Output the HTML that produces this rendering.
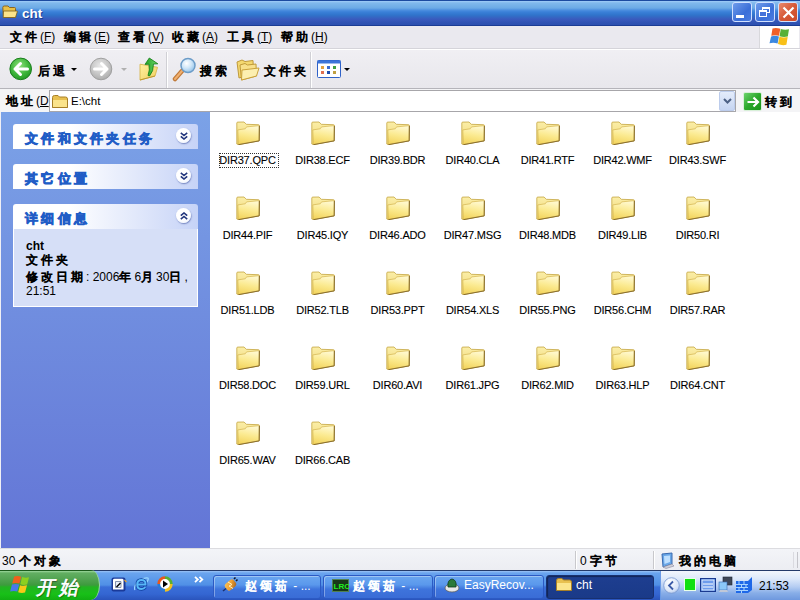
<!DOCTYPE html>
<html><head><meta charset="utf-8">
<style>
*{box-sizing:border-box;margin:0;padding:0}
html,body{width:800px;height:600px;overflow:hidden;background:#fff;font-family:"Liberation Sans",sans-serif;font-size:12px;color:#000}
.a{position:absolute}
#title{left:0;top:0;width:800px;height:26px;background:linear-gradient(to bottom,#1C4AA0 0px,#1C4AA0 1px,#A0CCF8 1px,#80B8EC 3px,#6CAAE6 8px,#4E90E0 10px,#3A80D8 12px,#3074CB 15px,#3468C4 17px,#3A5BBE 19px,#2E52B2 23px,#2C50B0 25px,#1A3C94 25px,#1A3C94 26px)}
#title .t{left:22px;top:6px;color:#fff;font-weight:bold;font-size:13.5px;text-shadow:1px 1px 0 #1A3C94}
.tb{top:2px;width:20px;height:20px;border:1px solid #D0E0FF;border-radius:3px;background:linear-gradient(135deg,#6E9CEB,#3B6FD8 60%,#4A7CE0)}
#menu{left:0;top:26px;width:800px;height:23px;background:#EAE9EF;border-bottom:1px solid #D5D4DA}
.m{top:3px}
#tool{left:0;top:49px;width:800px;height:40px;background:linear-gradient(#F0EFF3,#E8E7EC);border-top:1px solid #fff;border-bottom:1px solid #B5B4BA}
#addr{left:0;top:89px;width:800px;height:23px;background:#F4F4F6}
#left{left:0;top:112px;width:210px;height:436px;background:linear-gradient(#7BA2E7,#6375D6);border-left:1px solid #F0F0F5}
.ph{left:12px;width:185px;height:25px;border-radius:3px 3px 0 0;background:linear-gradient(to right,#fff 0%,#fff 30%,#C6D3F7 100%)}
.ph .ht{position:absolute;left:12px;top:6px;color:#215DC6;font-weight:bold;font-size:13px}
.chev{position:absolute;left:163px;top:4px;width:15px;height:15px;border-radius:50%;background:radial-gradient(circle at 40% 35%,#fff 50%,#E8EEFA 100%);box-shadow:0.5px 1px 1.5px rgba(40,60,140,.55)}
#content{left:210px;top:112px;width:590px;height:436px;background:#fff}
.it{width:75px;height:75px}
.it svg{position:absolute;left:26px;top:9px}
.it .l{position:absolute;left:0;top:41.5px;width:75px;text-align:center;font-size:11px;letter-spacing:-0.2px;-webkit-text-stroke:0.1px #000}
#status{left:0;top:548px;width:800px;height:22px;background:linear-gradient(#F3F4F8,#ECEDF2);border-top:1px solid #DCDCE0}
#task{left:0;top:570px;width:800px;height:30px;background:linear-gradient(#243A6A 0px,#243A6A 1px,#9CC4F6 1px,#6AA4EE 3px,#5A98EA 10px,#5090E6 15px,#3A6ED8 17px,#3466D2 24px,#2A54BC 30px)}
.btn{height:24px;border-radius:3px;background:linear-gradient(#6AA6F0,#5A98EC 40%,#3E74DC 60%,#3A6CD6);border:1px solid #2C5AC4;box-shadow:inset 1px 1px 0 rgba(255,255,255,.35)}
.btn .bt{position:absolute;top:1.5px;color:#fff;font-size:12px}
.cj{letter-spacing:0.25em;-webkit-text-stroke:0.75px currentColor}</style></head><body>
<svg width="0" height="0" style="position:absolute"><defs>
<linearGradient id="fg" x1="0.3" y1="0" x2="0.1" y2="1"><stop offset="0" stop-color="#FFF8CC"/><stop offset="0.45" stop-color="#FBEA90"/><stop offset="1" stop-color="#F2D258"/></linearGradient>
<linearGradient id="ft" x1="0" y1="0" x2="0" y2="1"><stop offset="0" stop-color="#FBEEA8"/><stop offset="1" stop-color="#EED470"/></linearGradient>
<symbol id="fold" viewBox="0 0 24 24">
<path d="M0.8,2 Q0.8,1.1 1.8,1.1 L8,1 L10.4,3.3 L22.6,3.7 Q23.5,3.8 23.5,4.8 L23.2,19.8 L2.4,23.6 L0.8,23 Z" fill="url(#ft)" stroke="#C4A440" stroke-width="0.8"/>
<path d="M1.8,8.9 L9.2,7.8 L10.6,5.9 L23.2,4.6 L23,19.7 L2.3,23.5 Z" fill="url(#fg)" stroke="#D4B450" stroke-width="0.7"/>
<path d="M23.4,5 L23.2,19.9 L2.4,23.7" fill="none" stroke="#7A6028" stroke-width="1" opacity="0.85"/>
</symbol></defs></svg>
<div id="title" class="a">
  <svg class="a" style="left:2px;top:5px" width="16" height="14" viewBox="0 0 16 14"><path d="M0.8,2.5 Q0.8,1 2.3,1 L6,1 L7.5,2.5 L12.5,2.5 Q13.5,2.5 13.5,3.5 L13.5,12.3 L1.5,12.3 Z" fill="#E8C048" stroke="#8A6420" stroke-width="1"/><path d="M1.5,6 L15,6 Q15.6,6 15.3,6.8 L13.5,12.5 L1.2,12.5 Z" fill="#FBE38A" stroke="#7A5A1A" stroke-width="0.8"/></svg>
  <div class="a t">cht</div>
  <div class="a tb" style="left:732px"><div class="a" style="left:3px;top:12px;width:8px;height:3px;background:#fff"></div></div>
  <div class="a tb" style="left:755px"><div class="a" style="left:6px;top:4px;width:8px;height:6px;border:1px solid #fff;border-top-width:2px"></div><div class="a" style="left:3px;top:7px;width:8px;height:7px;border:1px solid #fff;border-top-width:2px;background:#4573DA"></div></div>
  <div class="a tb" style="left:778px;background:linear-gradient(135deg,#E98A6E,#D65A38 50%,#CC4A28)"><svg class="a" style="left:3px;top:3px" width="13" height="13" viewBox="0 0 13 13"><path d="M1.5,1.5 L11.5,11.5 M11.5,1.5 L1.5,11.5" stroke="#fff" stroke-width="2.2"/></svg></div>
</div>
<div id="menu" class="a">
  <div class="a m" style="left:10px"><span class="cj">文件</span>(<u>F</u>)</div>
  <div class="a m" style="left:64px"><span class="cj">编辑</span>(<u>E</u>)</div>
  <div class="a m" style="left:118px"><span class="cj">查看</span>(<u>V</u>)</div>
  <div class="a m" style="left:172px"><span class="cj">收藏</span>(<u>A</u>)</div>
  <div class="a m" style="left:227px"><span class="cj">工具</span>(<u>T</u>)</div>
  <div class="a m" style="left:281px"><span class="cj">帮助</span>(<u>H</u>)</div>
  <div class="a" style="left:759px;top:0;width:40px;height:22px;background:#fff;border-left:1px solid #D8D8DC"></div>
  <svg class="a" style="left:768px;top:1px" width="22" height="20" viewBox="0 0 22 20"><path d="M4.5,1.5 Q8,0.5 12.3,1.8 L11,8.8 Q7,7.6 3.3,8.8 Z" fill="#F06028"/><path d="M12.8,2 Q17,3.2 21,2.2 L19.8,9.5 Q15.5,10.5 11.5,9.2 Z" fill="#58B038"/><path d="M3.1,9.4 Q7,8.2 10.9,9.4 L9.6,16.5 Q5.5,15.3 1.5,16.3 Z" fill="#3C88E0"/><path d="M11.4,9.8 Q15.5,11 19.7,10 L18.4,17.8 Q14,18.8 10,17 Z" fill="#F8C018"/></svg>
</div>
<div id="tool" class="a">
  <svg class="a" style="left:9px;top:7px" width="24" height="24" viewBox="0 0 24 24"><defs><radialGradient id="gb" cx="0.45" cy="0.35" r="0.7"><stop offset="0" stop-color="#8EE07A"/><stop offset="0.6" stop-color="#3DB53A"/><stop offset="1" stop-color="#1F9620"/></radialGradient></defs><circle cx="11.7" cy="11.9" r="10.8" fill="url(#gb)" stroke="#1B7E1E" stroke-width="1"/><path d="M18.5,12 L6,12 M11.5,6.5 L6,12 L11.5,17.5" fill="none" stroke="#fff" stroke-width="3" stroke-linecap="round" stroke-linejoin="round"/></svg>
  <div class="a" style="left:38px;top:13px"><span class="cj">后退</span></div>
  <div class="a" style="left:71px;top:18px;width:0;height:0;border-left:3px solid transparent;border-right:3px solid transparent;border-top:3px solid #000"></div>
  <svg class="a" style="left:89px;top:7px" width="24" height="24" viewBox="0 0 24 24"><defs><radialGradient id="gg" cx="0.45" cy="0.35" r="0.7"><stop offset="0" stop-color="#E8E8E8"/><stop offset="0.6" stop-color="#C4C4C4"/><stop offset="1" stop-color="#A8A8A8"/></radialGradient></defs><circle cx="12" cy="12" r="10.8" fill="url(#gg)" stroke="#A0A0A0" stroke-width="1"/><path d="M5.5,12 L18,12 M12.5,6.5 L18,12 L12.5,17.5" fill="none" stroke="#fff" stroke-width="3" stroke-linecap="round" stroke-linejoin="round"/></svg>
  <div class="a" style="left:121px;top:18px;width:0;height:0;border-left:3px solid transparent;border-right:3px solid transparent;border-top:3px solid #B0B0B0"></div>
  <svg class="a" style="left:138px;top:2px" width="22" height="30" viewBox="0 0 22 30"><defs><linearGradient id="upf" x1="0" y1="0" x2="1" y2="1"><stop offset="0" stop-color="#FFF0A0"/><stop offset="1" stop-color="#F0D060"/></linearGradient><linearGradient id="upa" x1="0" y1="0" x2="1" y2="0"><stop offset="0" stop-color="#20A020"/><stop offset="1" stop-color="#70D870"/></linearGradient></defs><path d="M2,12.2 L19.5,15.3 L17,24 L2,28 Z" fill="url(#upf)" stroke="#D8B850" stroke-width="0.9"/><path d="M2,28 L17,24" stroke="#C09830" stroke-width="1"/><path d="M11.3,6 L19.8,11.8 L15.4,12 Q15.8,19 11.5,24 L10,23.5 Q12.2,18 10.9,12.2 L7,12.4 Z" fill="url(#upa)" stroke="#0E7A10" stroke-width="0.8"/></svg>
  <div class="a" style="left:166px;top:2px;width:2px;height:36px;background:#D0D0D5;border-right:1px solid #fff"></div>
  <svg class="a" style="left:172px;top:7px" width="25" height="25" viewBox="0 0 25 25"><defs><radialGradient id="lens" cx="0.4" cy="0.35" r="0.7"><stop offset="0" stop-color="#FFFFFF"/><stop offset="0.5" stop-color="#CFE6F8"/><stop offset="1" stop-color="#8FC0E8"/></radialGradient></defs><path d="M3,22 L10,14" stroke="#C07A3A" stroke-width="4.5" stroke-linecap="round"/><path d="M3,22 L10,14" stroke="#F0B070" stroke-width="2" stroke-linecap="round"/><circle cx="16" cy="8.5" r="7" fill="url(#lens)" stroke="#6C9CC8" stroke-width="1.5"/></svg>
  <div class="a" style="left:200px;top:13px"><span class="cj">搜索</span></div>
  <svg class="a" style="left:236px;top:9px" width="24" height="22" viewBox="0 0 24 22"><path d="M1,3 L6,1 L9,2.5 L17,1.5 L17.5,14 L3,19 Z" fill="#F4D870" stroke="#C09A3A" stroke-width="1"/><path d="M4,6 L9,4.5 L11.5,6 L20,5 L20.5,17 L5.5,21 Z" fill="#F8E08A" stroke="#C09A3A" stroke-width="1"/><path d="M6,11 L23,9 L20.5,17 L5.5,21 Z" fill="#FCEFB0" stroke="#C9A13A" stroke-width="1"/></svg>
  <div class="a" style="left:264px;top:13px"><span class="cj">文件夹</span></div>
  <div class="a" style="left:310px;top:2px;width:2px;height:36px;background:#D0D0D5;border-right:1px solid #fff"></div>
  <svg class="a" style="left:317px;top:10px" width="25" height="19" viewBox="0 0 25 19"><rect x="0.5" y="0.5" width="23" height="17" rx="1" fill="#fff" stroke="#2F62C8"/><rect x="0.5" y="0.5" width="23" height="3" fill="#3D74D8"/><rect x="4" y="6" width="3" height="3" fill="#E0A040"/><rect x="10" y="6" width="3" height="3" fill="#3A6AD0"/><rect x="16" y="6" width="3" height="3" fill="#40A040"/><rect x="4" y="11" width="3" height="3" fill="#E07050"/><rect x="10" y="11" width="3" height="3" fill="#2050B0"/><rect x="16" y="11" width="3" height="3" fill="#C0A040"/></svg>
  <div class="a" style="left:344px;top:18px;width:0;height:0;border-left:3px solid transparent;border-right:3px solid transparent;border-top:3px solid #000"></div>
</div>
<div id="addr" class="a">
  <div class="a" style="left:6px;top:4px"><span class="cj">地址</span>(<u>D</u>)</div>
  <div class="a" style="left:49px;top:1px;width:687px;height:22px;background:#fff;border:1px solid #A7A6AA"></div>
  <svg class="a" style="left:52px;top:6px" width="16" height="13" viewBox="0 0 16 13"><path d="M0.5,2.5 Q0.5,0.5 2.5,0.5 L6,0.5 L7.5,2 L13.5,2 Q15.5,2 15.5,4 L15.5,12.5 L0.5,12.5 Z" fill="#E8C050" stroke="#A88028"/><path d="M1,5 L15,5 L15,12 L1,12 Z" fill="#FBE48C"/><path d="M0.5,12.5 L15.5,12.5" stroke="#A88028"/></svg>
  <div class="a" style="left:71px;top:6px;font-size:11.5px">E:\cht</div>
  <div class="a" style="left:719px;top:2px;width:16px;height:20px;border-radius:2px;background:linear-gradient(#E4ECFB,#C6D5F2);border:1px solid #BCCCEC"><svg class="a" style="left:3px;top:6px" width="9" height="6" viewBox="0 0 9 6"><path d="M1,1 L4.5,4.5 L8,1" fill="none" stroke="#4D6185" stroke-width="2"/></svg></div>
  <div class="a" style="left:743px;top:3px;width:19px;height:19px;background:linear-gradient(135deg,#6CD46C,#2DA82D 50%,#1A961A);border-radius:2px;border:1px solid #D8F0D8"><svg class="a" style="left:2px;top:2px" width="14" height="14" viewBox="0 0 14 14"><path d="M1.5,7 L11.5,7 M7.5,2.5 L12,7 L7.5,11.5" fill="none" stroke="#fff" stroke-width="2.2"/></svg></div>
  <div class="a" style="left:765px;top:5px"><span class="cj">转到</span></div>
</div>
<div id="left" class="a">
  <div class="a ph" style="top:12px"><div class="ht"><span class="cj">文件和文件夹任务</span></div><div class="chev"><svg class="a" style="left:4px;top:4px" width="8" height="8" viewBox="0 0 8 8"><path d="M0.8,0.8 L4,3.5 L7.2,0.8 M0.8,4.3 L4,7 L7.2,4.3" fill="none" stroke="#21357C" stroke-width="1.6"/></svg></div></div>
  <div class="a ph" style="top:52px"><div class="ht"><span class="cj">其它位置</span></div><div class="chev"><svg class="a" style="left:4px;top:4px" width="8" height="8" viewBox="0 0 8 8"><path d="M0.8,0.8 L4,3.5 L7.2,0.8 M0.8,4.3 L4,7 L7.2,4.3" fill="none" stroke="#21357C" stroke-width="1.6"/></svg></div></div>
  <div class="a ph" style="top:92px"><div class="ht"><span class="cj">详细信息</span></div><div class="chev"><svg class="a" style="left:4px;top:4px" width="8" height="8" viewBox="0 0 8 8"><path d="M0.8,3.7 L4,1 L7.2,3.7 M0.8,7.2 L4,4.5 L7.2,7.2" fill="none" stroke="#21357C" stroke-width="1.6"/></svg></div></div>
  <div class="a" style="left:12px;top:117px;width:185px;height:78px;background:#D6DFF7;border:1px solid #fff;border-top:0">
    <div class="a" style="left:12px;top:10px;font-weight:bold;font-size:12px">cht</div>
    <div class="a" style="left:12px;top:23px;font-size:12px"><span class="cj">文件夹</span></div>
    <div class="a" style="left:12px;top:41px;font-size:12px;line-height:14px;width:170px"><span class="cj">修改日期</span>: 2006<span class="cj">年</span>6<span class="cj">月</span>30<span class="cj">日</span>,<br>21:51</div>
  </div>
</div>
<div id="content" class="a">
<div class="a it" style="left:0px;top:0px"><svg width="24" height="24"><use href="#fold"/></svg><div class="a" style="left:9px;top:41px;width:60px;height:15px;border:1px dotted #333"></div><div class="l">DIR37.QPC</div></div>
<div class="a it" style="left:75px;top:0px"><svg width="24" height="24"><use href="#fold"/></svg><div class="l">DIR38.ECF</div></div>
<div class="a it" style="left:150px;top:0px"><svg width="24" height="24"><use href="#fold"/></svg><div class="l">DIR39.BDR</div></div>
<div class="a it" style="left:225px;top:0px"><svg width="24" height="24"><use href="#fold"/></svg><div class="l">DIR40.CLA</div></div>
<div class="a it" style="left:300px;top:0px"><svg width="24" height="24"><use href="#fold"/></svg><div class="l">DIR41.RTF</div></div>
<div class="a it" style="left:375px;top:0px"><svg width="24" height="24"><use href="#fold"/></svg><div class="l">DIR42.WMF</div></div>
<div class="a it" style="left:450px;top:0px"><svg width="24" height="24"><use href="#fold"/></svg><div class="l">DIR43.SWF</div></div>
<div class="a it" style="left:0px;top:75px"><svg width="24" height="24"><use href="#fold"/></svg><div class="l">DIR44.PIF</div></div>
<div class="a it" style="left:75px;top:75px"><svg width="24" height="24"><use href="#fold"/></svg><div class="l">DIR45.IQY</div></div>
<div class="a it" style="left:150px;top:75px"><svg width="24" height="24"><use href="#fold"/></svg><div class="l">DIR46.ADO</div></div>
<div class="a it" style="left:225px;top:75px"><svg width="24" height="24"><use href="#fold"/></svg><div class="l">DIR47.MSG</div></div>
<div class="a it" style="left:300px;top:75px"><svg width="24" height="24"><use href="#fold"/></svg><div class="l">DIR48.MDB</div></div>
<div class="a it" style="left:375px;top:75px"><svg width="24" height="24"><use href="#fold"/></svg><div class="l">DIR49.LIB</div></div>
<div class="a it" style="left:450px;top:75px"><svg width="24" height="24"><use href="#fold"/></svg><div class="l">DIR50.RI</div></div>
<div class="a it" style="left:0px;top:150px"><svg width="24" height="24"><use href="#fold"/></svg><div class="l">DIR51.LDB</div></div>
<div class="a it" style="left:75px;top:150px"><svg width="24" height="24"><use href="#fold"/></svg><div class="l">DIR52.TLB</div></div>
<div class="a it" style="left:150px;top:150px"><svg width="24" height="24"><use href="#fold"/></svg><div class="l">DIR53.PPT</div></div>
<div class="a it" style="left:225px;top:150px"><svg width="24" height="24"><use href="#fold"/></svg><div class="l">DIR54.XLS</div></div>
<div class="a it" style="left:300px;top:150px"><svg width="24" height="24"><use href="#fold"/></svg><div class="l">DIR55.PNG</div></div>
<div class="a it" style="left:375px;top:150px"><svg width="24" height="24"><use href="#fold"/></svg><div class="l">DIR56.CHM</div></div>
<div class="a it" style="left:450px;top:150px"><svg width="24" height="24"><use href="#fold"/></svg><div class="l">DIR57.RAR</div></div>
<div class="a it" style="left:0px;top:225px"><svg width="24" height="24"><use href="#fold"/></svg><div class="l">DIR58.DOC</div></div>
<div class="a it" style="left:75px;top:225px"><svg width="24" height="24"><use href="#fold"/></svg><div class="l">DIR59.URL</div></div>
<div class="a it" style="left:150px;top:225px"><svg width="24" height="24"><use href="#fold"/></svg><div class="l">DIR60.AVI</div></div>
<div class="a it" style="left:225px;top:225px"><svg width="24" height="24"><use href="#fold"/></svg><div class="l">DIR61.JPG</div></div>
<div class="a it" style="left:300px;top:225px"><svg width="24" height="24"><use href="#fold"/></svg><div class="l">DIR62.MID</div></div>
<div class="a it" style="left:375px;top:225px"><svg width="24" height="24"><use href="#fold"/></svg><div class="l">DIR63.HLP</div></div>
<div class="a it" style="left:450px;top:225px"><svg width="24" height="24"><use href="#fold"/></svg><div class="l">DIR64.CNT</div></div>
<div class="a it" style="left:0px;top:300px"><svg width="24" height="24"><use href="#fold"/></svg><div class="l">DIR65.WAV</div></div>
<div class="a it" style="left:75px;top:300px"><svg width="24" height="24"><use href="#fold"/></svg><div class="l">DIR66.CAB</div></div>
</div>
<div id="status" class="a">
  <div class="a" style="left:2px;top:4px;font-size:12px">30 <span class="cj">个对象</span></div>
  <div class="a" style="left:575px;top:2px;width:2px;height:18px;background:#C8C8CC;border-right:1px solid #fff"></div>
  <div class="a" style="left:580px;top:4px;font-size:12px">0 <span class="cj">字节</span></div>
  <div class="a" style="left:653px;top:2px;width:2px;height:18px;background:#C8C8CC;border-right:1px solid #fff"></div>
  <svg class="a" style="left:660px;top:3px" width="15" height="17" viewBox="0 0 15 17"><path d="M2,2 L12,1 L12,12 L3,15 Z" fill="#6AA8E8" stroke="#3A6AB0"/><path d="M4,4 L10,3.5 L10,10 L4.5,12 Z" fill="#BFE0FF"/><path d="M3,15 L12,12 L14,14 L6,16.5 Z" fill="#D0D0D8" stroke="#8888A0" stroke-width="0.6"/></svg>
  <div class="a" style="left:679px;top:4px;font-size:12px"><span class="cj">我的电脑</span></div>
  <div class="a" style="left:793px;top:3px;width:1px;height:16px;background:#DADAE0"></div><div class="a" style="left:797px;top:3px;width:1px;height:16px;background:#C4C4CA"></div>
</div>
<div id="task" class="a">
  <div class="a" style="left:0;top:0;width:100px;height:30px;border-radius:0 9px 9px 0 / 0 15px 15px 0;border-right:1px solid #9BD89B;background:linear-gradient(#1A5A1A 0px,#1A5A1A 1px,#9ED89E 1px,#62AE62 3px,#52A452 9px,#3E9A3E 15px,#22B422 17px,#18C018 24px,#12AE12 30px)"></div>
  <svg class="a" style="left:7px;top:5px" width="22" height="19" viewBox="0 0 22 19"><g transform="skewX(-12) translate(3,0)"><path d="M4.5,1.5 Q8,0.5 11.6,1.8 L11.2,8.5 Q7.5,7.6 4,8.5 Z" fill="#F0601C"/><path d="M12.6,2 Q16.5,3.2 19.5,2.2 L19.2,9.5 Q15.5,10.5 12.2,9.2 Z" fill="#8CD020"/><path d="M4,9.5 Q7.5,8.5 11.2,9.5 L10.8,16.5 Q7.2,15.5 3.6,16.5 Z" fill="#4A78E8"/><path d="M12.2,10.2 Q15.5,11.2 19.2,10.3 L18.8,17.6 Q15.2,18.6 11.8,17.2 Z" fill="#F8C818"/></g></svg>
  <div class="a" style="left:37px;top:5px;color:#fff;font-size:19px;transform:skewX(-12deg);text-shadow:1px 1px 1px rgba(0,0,0,.5)"><span class="cj">开始</span></div>
  <div class="a" style="left:660px;top:1px;width:140px;height:29px;background:linear-gradient(#F2F6FD 0px,#DCE8FA 8px,#B4CCF2 16px,#88AEE8 22px,#6E98DE 29px);border-left:1px solid #6A9AE6"></div>
  <div class="a btn" style="left:213px;top:5px;width:108px"><div class="bt" style="left:31px"><span class="cj">赵颂茹</span> - ...</div></div>
  <div class="a btn" style="left:323px;top:5px;width:110px"><div class="bt" style="left:29px"><span class="cj">赵颂茹</span> - ...</div></div>
  <div class="a btn" style="left:434px;top:5px;width:110px"><div class="bt" style="left:29px;font-size:12px">EasyRecov...</div></div>
  <div class="a btn" style="left:546px;top:5px;width:108px;background:linear-gradient(#1E3E90,#1A3A88);border-color:#183070;box-shadow:inset 1px 1px 1px rgba(0,0,0,.4)"><div class="bt" style="left:29px">cht</div></div>
  <div class="a" style="left:759px;top:9px;color:#000;font-size:12px">21:53</div>
  <svg class="a" style="left:194px;top:6px" width="11" height="7" viewBox="0 0 11 7"><path d="M1,0.8 L3.8,3.5 L1,6.2 M5.5,0.8 L8.3,3.5 L5.5,6.2" fill="none" stroke="#fff" stroke-width="1.8"/></svg>
  <svg class="a" style="left:663px;top:7px" width="17" height="17" viewBox="0 0 17 17"><defs><radialGradient id="tc" cx="0.4" cy="0.3" r="0.8"><stop offset="0" stop-color="#fff"/><stop offset="0.7" stop-color="#D8E4F8"/><stop offset="1" stop-color="#98B4E0"/></radialGradient></defs><circle cx="8.5" cy="8.5" r="7.8" fill="url(#tc)" stroke="#7898D0" stroke-width="0.8"/><path d="M10,4.5 L6,8.5 L10,12.5" fill="none" stroke="#3C5CA8" stroke-width="1.8"/></svg>
  <div class="a" style="left:684px;top:8px;width:12px;height:13px;background:#10E010;border:1px solid #E8FFE8"></div>
  <svg class="a" style="left:700px;top:8px" width="16" height="14" viewBox="0 0 16 14"><rect x="0.5" y="0.5" width="15" height="13" fill="#4C84E0" stroke="#1A3A90"/><rect x="2" y="2" width="12" height="10" fill="#6E9CEC" stroke="#fff" stroke-width="0.8"/><path d="M3,6 L13,6 M3,9 L13,9" stroke="#fff"/></svg>
  <svg class="a" style="left:718px;top:6px" width="15" height="17" viewBox="0 0 15 17"><rect x="5" y="1" width="9" height="8" fill="#404858" stroke="#202838" stroke-width="0.6"/><rect x="1" y="6" width="8" height="8" fill="#8CC8F8" stroke="#3A6AB0" stroke-width="0.6"/><path d="M2,14 L9,14 L10,16 L1,16 Z" fill="#C0C8D8"/></svg>
  <svg class="a" style="left:735px;top:6px" width="18" height="18" viewBox="0 0 18 18"><path d="M1,5 L13,5 L17,1 L17,14 L13,17 L1,17 Z" fill="#1E68E8"/><g stroke="#A8D4FF" stroke-width="1"><path d="M1,8.5 L13,8.5 M1,11.5 L13,11.5 M1,14.5 L13,14.5"/><path d="M4,5 L4,8.5 M9,5 L9,8.5 M6.5,8.5 L6.5,11.5 M11,8.5 L11,11.5 M4,11.5 L4,14.5 M9,11.5 L9,14.5 M6.5,14.5 L6.5,17"/></g></svg>
  <svg class="a" style="left:111px;top:7px" width="16" height="15" viewBox="0 0 16 15"><rect x="0.5" y="0.5" width="14" height="14" rx="2" fill="#1A3A9A"/><path d="M2,3 Q2,1.8 3.5,1.8 L11,1.8 Q12.5,1.8 12.5,3 L12.5,12.5 L2,12.5 Z" fill="#fff"/><path d="M4.5,4.5 L10,4.5 L10,10.5 L4.5,10.5 Z" fill="#E8EEF8" stroke="#6A7A9A" stroke-width="0.8"/><path d="M5.5,10 L9.5,6" stroke="#000" stroke-width="1.5"/><path d="M13.5,3 L15.5,5" stroke="#E8A030" stroke-width="1.2"/></svg>
  <svg class="a" style="left:134px;top:7px" width="15" height="14" viewBox="0 0 15 14"><path d="M1,13 Q-1,9 5,4 Q11,0 14,1 Q15,3 12,6" fill="none" stroke="#9AD8FF" stroke-width="1.2"/><path d="M3.5,7.5 L11.5,7.5 Q11.8,3 7.5,3 Q3.2,3 3.2,7.5 Q3.2,12 7.5,12 Q10,12 11.3,10" fill="none" stroke="#0E3E9E" stroke-width="3.4"/><path d="M3.5,7.5 L11.5,7.5 Q11.8,3 7.5,3 Q3.2,3 3.2,7.5 Q3.2,12 7.5,12 Q10,12 11.3,10" fill="none" stroke="#58B8F8" stroke-width="2"/></svg>
  <svg class="a" style="left:157px;top:6px" width="16" height="16" viewBox="0 0 16 16"><circle cx="8" cy="8" r="6.3" fill="#fff"/><path d="M8,1.7 A6.3,6.3 0 0 0 1.7,8" stroke="#E8581C" stroke-width="2.8" fill="none"/><path d="M8,1.7 A6.3,6.3 0 0 1 14.3,8" stroke="#5AB030" stroke-width="2.8" fill="none"/><path d="M14.3,8 A6.3,6.3 0 0 1 8,14.3" stroke="#F4C020" stroke-width="2.8" fill="none"/><path d="M8,14.3 A6.3,6.3 0 0 1 1.7,8" stroke="#2A7AD8" stroke-width="2.8" fill="none"/><path d="M6,4.5 L11,8 L6,11.5 Z" fill="#000"/></svg>
  <svg class="a" style="left:221px;top:6px" width="18" height="17" viewBox="0 0 18 17"><defs><linearGradient id="plg" x1="0" y1="0" x2="1" y2="1"><stop offset="0" stop-color="#F8C860"/><stop offset="0.5" stop-color="#F0A030"/><stop offset="1" stop-color="#A06020"/></linearGradient></defs><rect x="4" y="5" width="11" height="8" rx="2.5" transform="rotate(-40 9.5 9)" fill="url(#plg)"/><path d="M7,6 L11,8.5 L8,10 L12,12.5" fill="none" stroke="#FFF0C0" stroke-width="1"/><path d="M2,15 L5,12.5" stroke="#1A3070" stroke-width="1.5"/><path d="M13,3 L14.5,1.5 M15,5 L16.5,3.5" stroke="#101830" stroke-width="1.6"/></svg>
  <svg class="a" style="left:332px;top:9px" width="17" height="13" viewBox="0 0 17 13"><rect x="0.5" y="0.5" width="16" height="12" fill="#183818" stroke="#508050"/><text x="1.5" y="10" font-size="8" font-family="Liberation Sans" font-weight="bold" fill="#20F020">LRC</text></svg>
  <svg class="a" style="left:444px;top:6px" width="16" height="17" viewBox="0 0 16 17"><ellipse cx="8" cy="12" rx="7" ry="4" fill="#E8E8E8" stroke="#606060" stroke-width="0.8"/><path d="M4,11 Q3,4 8,3 Q13,4 12,11 Z" fill="#2A7A3A" stroke="#103A18" stroke-width="0.8"/></svg>
  <svg class="a" style="left:556px;top:8px" width="16" height="14" viewBox="0 0 16 14"><path d="M0.5,2.5 Q0.5,0.5 2.5,0.5 L6,0.5 L7.5,2 L13.5,2 Q15.5,2 15.5,4 L15.5,12.5 L0.5,12.5 Z" fill="#E8C050" stroke="#A88028"/><path d="M1,5 L15,5 L15,12 L1,12 Z" fill="#FBE48C"/></svg>
</div>
</body></html>
